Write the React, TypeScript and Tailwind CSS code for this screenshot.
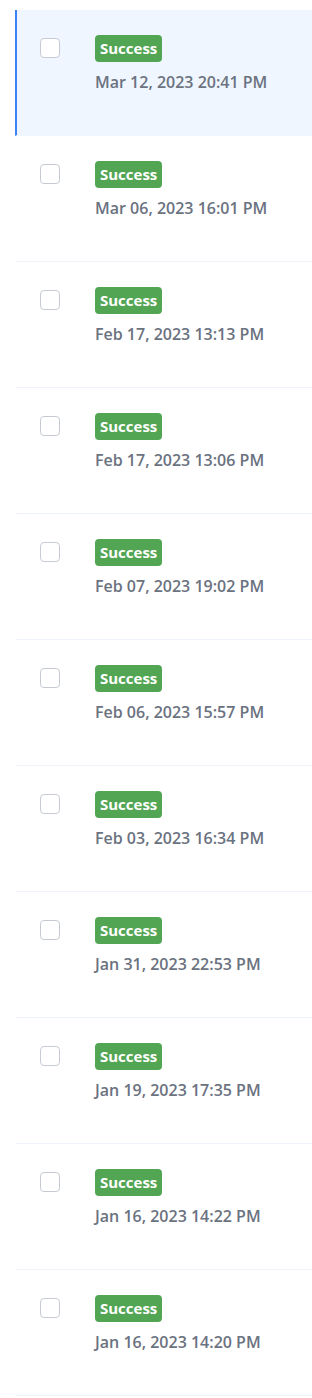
import React from "react";

const rows = [
  "Mar 12, 2023 20:41 PM",
  "Mar 06, 2023 16:01 PM",
  "Feb 17, 2023 13:13 PM",
  "Feb 17, 2023 13:06 PM",
  "Feb 07, 2023 19:02 PM",
  "Feb 06, 2023 15:57 PM",
  "Feb 03, 2023 16:34 PM",
  "Jan 31, 2023 22:53 PM",
  "Jan 19, 2023 17:35 PM",
  "Jan 16, 2023 14:22 PM",
  "Jan 16, 2023 14:20 PM",
];

export default function App() {
  return (
    <div
      className="w-[312px] bg-white pt-[10px] pl-[15px]"
      style={{ fontFamily: "'Open Sans', Lato, sans-serif" }}
    >
      {rows.map((date, i) => {
        const active = i === 0;
        return (
          <div
            key={i}
            className={
              active
                ? "flex h-[126px] border-b border-l-2 border-b-[#eff6ff] border-l-[#3b82f6] bg-[#eff6ff]"
                : "flex h-[126px] border-b border-l-2 border-b-[#eff4fb] border-l-transparent bg-white"
            }
          >
            <div className="pl-[23px] pt-[28px]">
              <div className="h-5 w-5 rounded-[4px] border border-[#c6cbd3] bg-white" />
            </div>
            <div className="flex flex-col items-start pl-[35px] pt-[25px]">
              <span className="flex h-[27px] items-center rounded-[4px] bg-[#52a552] px-[5px] text-[15px] font-bold text-white">
                Success
              </span>
              <span className="mt-[10px] text-[16px] font-semibold leading-[20px] text-[#6b7280]">
                {date}
              </span>
            </div>
          </div>
        );
      })}
    </div>
  );
}
